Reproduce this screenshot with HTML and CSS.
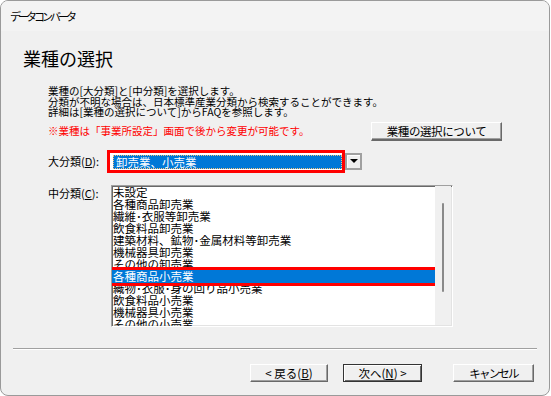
FILE: index.html
```html
<!DOCTYPE html>
<html lang="ja">
<head>
  <meta charset="UTF-8" />
  <title>データコンバータ</title>
  <link rel="stylesheet" href="styles.css">
</head>
<body>

  <div class="window">
    <div class="titlebar">データコンバータ</div>

    <div class="content">
      <h1>業種の選択</h1>

      <div class="desc">
        <p>業種の[大分類]と[中分類]を選択します。</p>
        <p>分類が不明な場合は、日本標準産業分類から検索することができます。</p>
        <p>詳細は[業種の選択について]からFAQを参照します。</p>
        <div class="note-row">
          <p class="note">※業種は「事業所設定」画面で後から変更が可能です。</p>
          <button class="btn btn-about">業種の選択について</button>
        </div>
      </div>

      <div class="field-row">
        <label class="field-label">大分類(<u>D</u>):</label>
        <div class="combo">
          <div class="combo-field"><span class="combo-value">卸売業、小売業</span></div>
          <div class="combo-btn"><span class="arrow"></span></div>
        </div>
      </div>

      <div class="field-row list-row">
        <label class="field-label list-label">中分類(<u>C</u>):</label>
        <div class="listbox">
          <ul class="items">
            <li>未設定</li>
            <li>各種商品卸売業</li>
            <li>繊維･衣服等卸売業</li>
            <li>飲食料品卸売業</li>
            <li>建築材料、鉱物･金属材料等卸売業</li>
            <li>機械器具卸売業</li>
            <li>その他の卸売業</li>
            <li class="selected">各種商品小売業</li>
            <li>織物･衣服･身の回り品小売業</li>
            <li>飲食料品小売業</li>
            <li>機械器具小売業</li>
            <li>その他の小売業</li>
          </ul>
          <div class="scrollbar"><div class="thumb"></div></div>
        </div>
      </div>
    </div>

    <div class="separator"></div>

    <div class="footer">
      <button class="btn btn-back">&lt; 戻る(<u>B</u>)</button>
      <button class="btn btn-next">次へ(<u>N</u>) &gt;</button>
      <button class="btn btn-cancel">キャンセル</button>
    </div>
  </div>

</body>
</html>
```

FILE: styles.css
```css
body {
  margin: 0;
  background-color: #fff;
  font-family: "Noto Sans CJK JP", "Liberation Sans", sans-serif;
  color: #000;
}

.window {
  width: 550px;
  height: 396px;
  box-sizing: border-box;
  border: 1px solid #9a9a9a;
  border-radius: 8px;
  background-color: #f0f0f0;
  overflow: hidden;
  display: flex;
  flex-direction: column;
}

.titlebar {
  height: 30px;
  flex-shrink: 0;
  display: flex;
  align-items: center;
  padding-left: 9px;
  background-color: #f3f3f3;
  font-size: 11px;
  letter-spacing: -3px;
}

.content {
  padding-left: 22px;
}

h1 {
  margin: 17px 0 0;
  font-size: 18px;
  line-height: 20px;
  font-weight: normal;
}

.desc {
  width: 454px;
  margin: 18px 0 0 25px;
}

.desc p {
  margin: 0;
  font-size: 10.5px;
  line-height: 10.5px;
}

.note-row {
  display: flex;
  align-items: center;
  justify-content: space-between;
  margin-top: 4px;
}

.desc .note {
  color: #ff0000;
}

.btn {
  font-family: inherit;
  font-size: 11.5px;
  color: #000;
  background-color: #f0f0f0;
  border: 1px solid;
  border-color: #fff #696969 #696969 #fff;
  box-shadow: inset -1px -1px #a0a0a0;
  padding: 0;
  height: 18px;
  line-height: 14px;
}

.btn-about {
  width: 131px;
  height: 19px;
  border-bottom-width: 2px;
  letter-spacing: -0.4px;
}

.field-row {
  display: flex;
  align-items: center;
  margin: 12px 0 0 25px;
}

.field-label {
  width: 62px;
  font-size: 11px;
  line-height: 12px;
}

.combo {
  display: flex;
  gap: 3px;
}

.combo-field {
  width: 232px;
  height: 17px;
  box-sizing: border-box;
  padding: 2px 0 1px 3px;
  background-color: #fff;
  outline: 3px solid #ff0000;
}

.combo-value {
  display: block;
  height: 14px;
  box-sizing: border-box;
  padding-left: 2px;
  background-color: #0078d7;
  border: 1px dotted #f2c27c;
  color: #fff;
  font-size: 11.5px;
  line-height: 12px;
}

.combo-btn {
  width: 17px;
  height: 17px;
  box-sizing: border-box;
  border: 2px solid #a0a0a0;
  box-shadow: inset 1px 1px #fff;
  background-color: #f0f0f0;
  display: flex;
  align-items: center;
  justify-content: center;
}

.arrow {
  width: 0;
  height: 0;
  border-left: 4px solid transparent;
  border-right: 4px solid transparent;
  border-top: 4px solid #000;
}

.list-row {
  align-items: flex-start;
  margin-top: 15px;
}

.list-label {
  width: 63px;
  margin-top: 2px;
}

.listbox {
  width: 342px;
  height: 142px;
  box-sizing: border-box;
  display: flex;
  border: 1px solid;
  border-color: #a0a0a0 #fff #fff #a0a0a0;
  box-shadow: inset 1px 1px #696969, inset -1px -1px #e3e3e3;
  background-color: #fff;
}

.items {
  flex: 1;
  list-style: none;
  margin: 0;
  padding: 0;
  overflow: hidden;
}

.items li {
  height: 12px;
  font-size: 11.5px;
  line-height: 12px;
  white-space: nowrap;
  padding-left: 1px;
}

.items li.selected {
  position: relative;
  height: 13px;
  margin-bottom: -1px;
  background-color: #0078d7;
  color: #fff;
  outline: 3px solid #ff0000;
}

.scrollbar {
  width: 16px;
  margin: 0 1px 1px 0;
  background-color: #f0f0f0;
}

.thumb {
  width: 2px;
  height: 89px;
  margin: 17px 0 0 7px;
  border-radius: 1px;
  background-color: #8a8a8a;
}

.separator {
  height: 0;
  width: 524px;
  margin: 21px 0 0 12px;
  border-top: 1px solid #a0a0a0;
  border-bottom: 1px solid #fff;
}

.footer {
  display: flex;
  justify-content: flex-end;
  margin-top: 14px;
  padding-right: 15px;
}

.btn-back {
  width: 78px;
}

.btn-next {
  width: 79px;
  margin-left: 15px;
  border-color: #333;
  box-shadow: inset 1px 1px #fff, inset -1px -1px #696969;
}

.btn-cancel {
  width: 81px;
  margin-left: 31px;
  letter-spacing: -1.8px;
}
```
